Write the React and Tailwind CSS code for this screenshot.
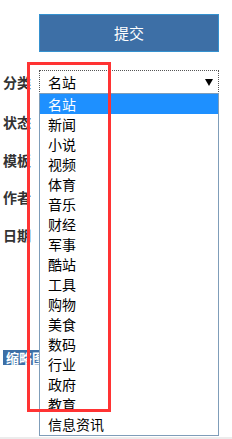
import { useState } from "react";

const options = ["名站", "新闻", "小说", "视频", "体育", "音乐", "财经", "军事", "酷站", "工具", "购物", "美食", "数码", "行业", "政府", "教育", "信息资讯"];

export default function App() {
  const [selected] = useState("名站");

  return (
    <div className="relative w-[232px] h-[439px] overflow-hidden bg-white text-[#333] font-['Microsoft_YaHei','Noto_Sans_CJK_SC',sans-serif]">

      {/* Submit */}
      <div className="pt-[14px] pl-[39px]">
        <button className="w-[180px] h-[38px] bg-[#3d6fa6] border border-[#3591cf] text-white text-[15px] flex items-center justify-center">
          提交
        </button>
      </div>

      {/* Form rows */}
      <div className="mt-[18px] flex flex-col">
        <div className="flex items-center h-[24px]">
          <span className="w-[39px] pl-[3px] text-[14px] font-bold">分类</span>
          <div className="w-[180px] h-[24px] border border-dotted border-[#555] flex items-center justify-between pl-[8px] pr-[5px] text-[14px] text-black">
            <span>{selected}</span>
            <svg width="8" height="7" viewBox="0 0 8 7"><path d="M0 0h8L4 7z" fill="#000" /></svg>
          </div>
        </div>
        <div className="flex items-center h-[24px] mt-[16px]">
          <span className="w-[39px] pl-[3px] text-[14px] font-bold">状态</span>
        </div>
        <div className="flex items-center h-[24px] mt-[14px]">
          <span className="w-[39px] pl-[3px] text-[14px] font-bold">模板</span>
        </div>
        <div className="flex items-center h-[24px] mt-[13px]">
          <span className="w-[39px] pl-[3px] text-[14px] font-bold">作者</span>
        </div>
        <div className="flex items-center h-[24px] mt-[14px]">
          <span className="w-[39px] pl-[3px] text-[14px] font-bold">日期</span>
        </div>
        <div className="mt-[103px] pl-[3px]">
          <div className="w-[52px] h-[15px] bg-[#3d6fa6] text-white text-[13px] font-bold leading-[15px] pl-[3px]">缩略图</div>
        </div>
      </div>

      {/* Open dropdown list */}
      <ul className="absolute left-[39px] top-[93px] w-[180px] h-[343px] bg-white border border-[#7f9db9] text-[14px] text-black">
        {options.map(o => (
          <li key={o} className={`h-[20px] leading-[20px] pl-[8px] ${o === selected ? 'bg-[#1e90ff] text-white' : ''}`}>
            {o}
          </li>
        ))}
      </ul>

      {/* Red highlight box */}
      <div className="absolute left-[27px] top-[62px] w-[84px] h-[350px] border-[3px] border-[#ff3333]" />

      {/* bottom strip */}
      <div className="absolute left-0 bottom-0 w-full h-[2px] bg-[#ececec]" />
    </div>
  );
}
